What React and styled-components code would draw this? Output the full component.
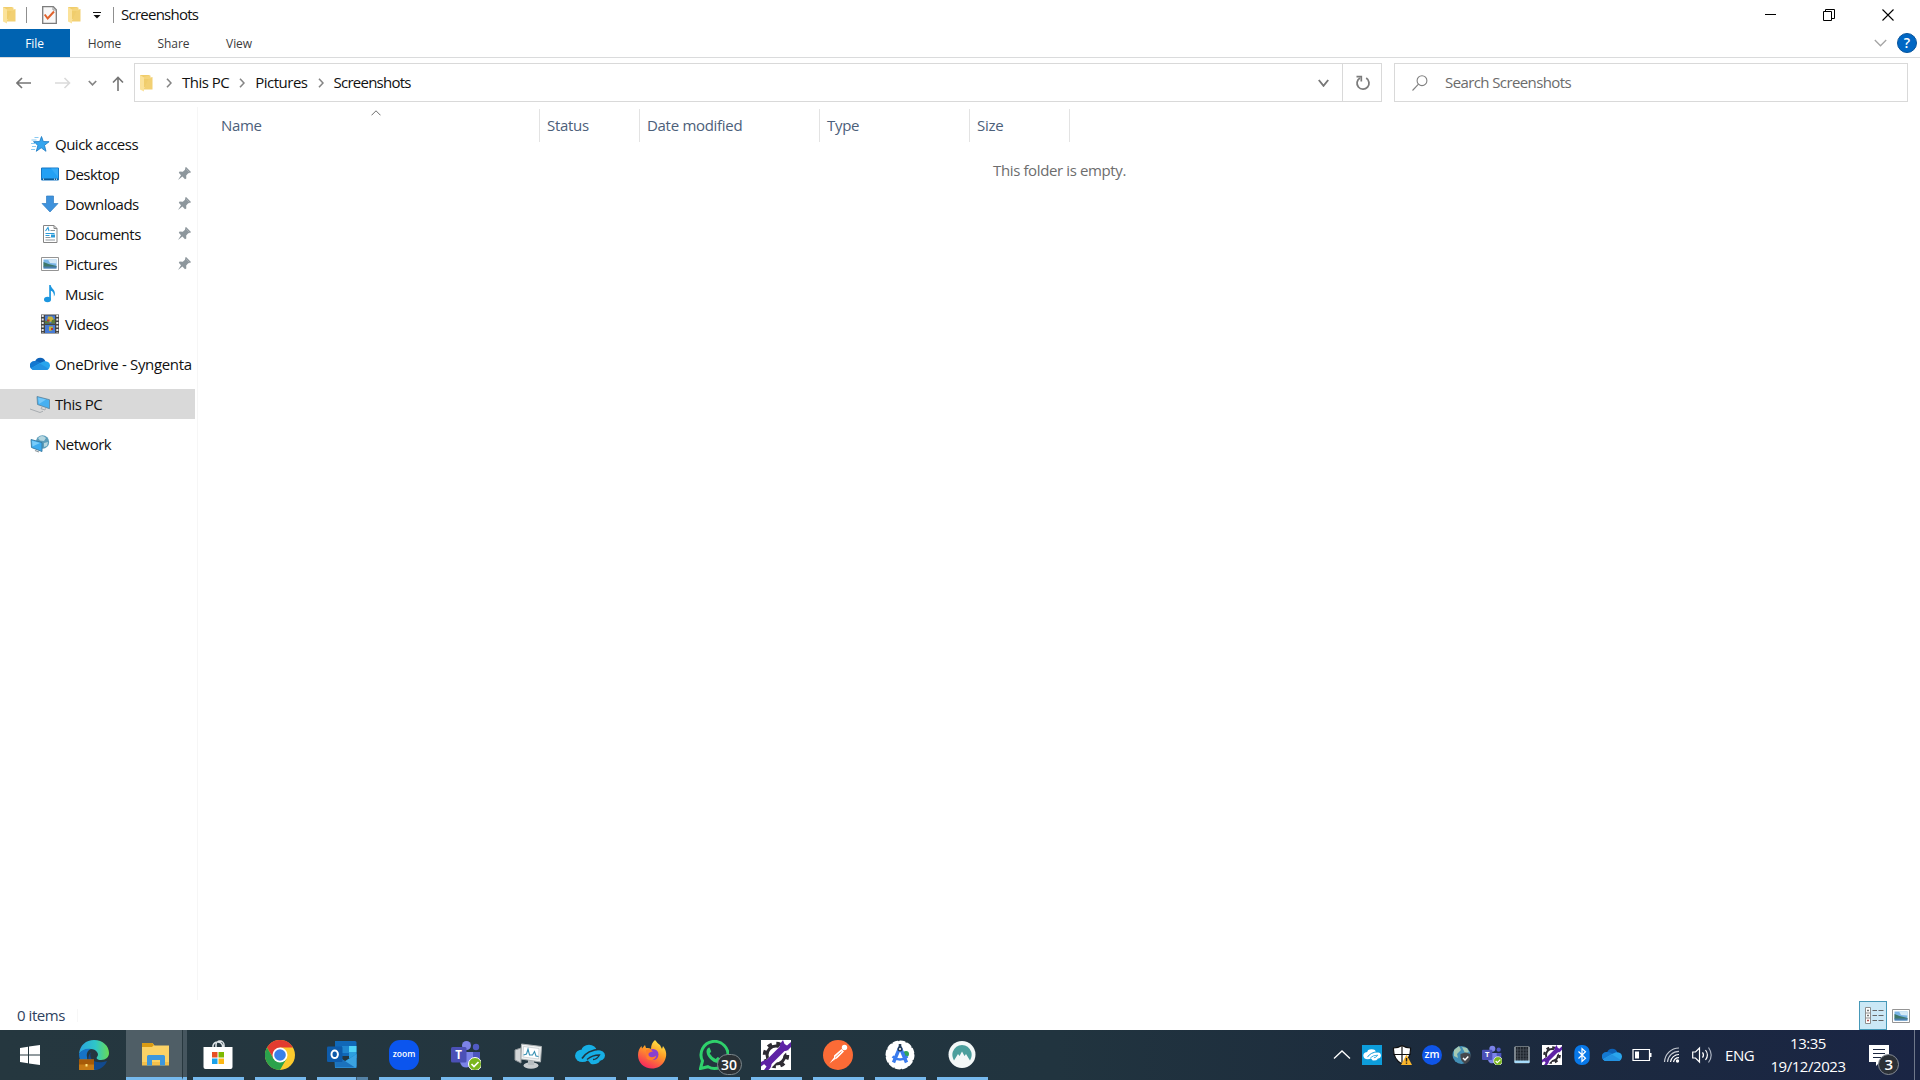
import styled, { createGlobalStyle } from 'styled-components'

const quickLinks = [
  { label: 'Desktop', icon: DesktopIcon, pinned: true },
  { label: 'Downloads', icon: DownloadsIcon, pinned: true },
  { label: 'Documents', icon: DocumentsIcon, pinned: true },
  { label: 'Pictures', icon: PictureIcon, pinned: true },
  { label: 'Music', icon: MusicIcon },
  { label: 'Videos', icon: VideosIcon },
]

const columns = [
  { label: 'Name', width: 333, sorted: true },
  { label: 'Status', width: 100 },
  { label: 'Date modified', width: 180 },
  { label: 'Type', width: 150 },
  { label: 'Size', width: 100 },
]

const runningApps = [
  ZoomIcon,
  TeamsIcon,
  MonitorIcon,
  ZscalerIcon,
  FirefoxIcon,
  WhatsappIcon,
  ToolIcon,
  PostmanIcon,
  AndroidStudioIcon,
  NordIcon,
]

export default function App() {
  return (
    <Screen>
      <GlobalStyle />
      <TitleBar />
      <Ribbon />
      <NavigationBar />
      <Body>
        <Sidebar />
        <FileList>
          <ColumnHeader>
            {columns.map(({ label, width, sorted }) => (
              <Column key={label} $width={width}>
                {label}
                {sorted && <SortArrow />}
              </Column>
            ))}
          </ColumnHeader>
          <EmptyMessage>This folder is empty.</EmptyMessage>
        </FileList>
      </Body>
      <StatusBar>
        <ItemCount>0 items</ItemCount>
        <ViewButton $active>
          <DetailsIcon />
        </ViewButton>
        <ViewButton>
          <PictureIcon />
        </ViewButton>
      </StatusBar>
      <Taskbar />
    </Screen>
  )
}

function TitleBar() {
  return (
    <TitleRow>
      <QuickTools>
        <FolderIcon />
        <Separator $left={10} $right={15} />
        <svg width="15" height="18" viewBox="0 0 15 18">
          <path d="M.7.7h10.600l3 3v13.600H.7z" fill="#f8f8f8" stroke="#7c7c7c" strokeWidth="1.300" />
          <path d="M11 .7v3.300h3.300" fill="none" stroke="#999" />
          <path d="M2.700 8.500l3 4L12 5.500" fill="none" stroke="#e0622c" strokeWidth="2" />
        </svg>
        <ToolGap />
        <FolderIcon />
        <Customize width="8" height="7" viewBox="0 0 8 7">
          <path d="M0 .5h8" stroke="#111" />
          <path d="M.5 3h7L4 6.500z" fill="#111" />
        </Customize>
        <Separator $left={12} $right={7} />
        <Title>Screenshots</Title>
      </QuickTools>
      <WindowButtons>
        <svg width="12" height="12" viewBox="0 0 12 12">
          <path d="M1 5.500h11" stroke="#000" />
        </svg>
        <svg width="12" height="12" viewBox="0 0 12 12">
          <path d="M.5 2.500h8v9h-8zM2.500 2.500v-2h9v9h-3" fill="none" stroke="#000" />
        </svg>
        <svg width="12" height="12" viewBox="0 0 12 12">
          <path d="M.5.500l11 11M11.500.500l-11 11" stroke="#000" strokeWidth="1.100" />
        </svg>
      </WindowButtons>
    </TitleRow>
  )
}

function Ribbon() {
  return (
    <RibbonRow>
      <FileTab>File</FileTab>
      <RibbonTab $width={69}>Home</RibbonTab>
      <RibbonTab $width={69}>Share</RibbonTab>
      <RibbonTab $width={62}>View</RibbonTab>
      <RibbonEnd>
        <Chevron color="#a5a5a5" width={13} height={8} />
        <HelpButton>?</HelpButton>
      </RibbonEnd>
    </RibbonRow>
  )
}

function NavigationBar() {
  return (
    <NavRow>
      <Arrows>
        <svg width="16" height="12" viewBox="0 0 16 12">
          <path d="M15 6H1.500M6 1L1 6l5 5" fill="none" stroke="#757575" strokeWidth="1.600" />
        </svg>
        <svg width="16" height="12" viewBox="0 0 16 12">
          <path d="M0 6h14.500M9.500 1l5 5-5 5" fill="none" stroke="#dadada" strokeWidth="1.600" />
        </svg>
        <Chevron color="#858585" width={9} height={6} stroke={1.7} />
        <svg width="12" height="15" viewBox="0 0 12 15">
          <path d="M6 15V1.500M1 6.500l5-5 5 5" fill="none" stroke="#757575" strokeWidth="1.600" />
        </svg>
      </Arrows>
      <AddressBar>
        <FolderIcon />
        <CrumbArrow $left={13} />
        <Crumb>This PC</Crumb>
        <CrumbArrow />
        <Crumb>Pictures</Crumb>
        <CrumbArrow />
        <Title>Screenshots</Title>
        <AddressEnd>
          <Chevron color="#777" width={11} height={8} stroke={1.9} />
        </AddressEnd>
        <RefreshButton>
          <svg width="16" height="16" viewBox="0 0 16 16">
            <path d="M5 3A6 6 0 1 0 11.200 3.100" fill="none" stroke="#7c7c7c" strokeWidth="1.800" />
            <path d="M1.500 1.700h4.800v4.800" fill="none" stroke="#7c7c7c" strokeWidth="1.700" />
          </svg>
        </RefreshButton>
      </AddressBar>
      <SearchBox>
        <svg width="16" height="16" viewBox="0 0 16 16">
          <circle cx="10" cy="5.700" r="4.900" fill="none" stroke="#808080" strokeWidth="1.100" />
          <path d="M6.500 9.200L.5 15.500" stroke="#808080" strokeWidth="1.100" />
        </svg>
        <SearchHint>Search Screenshots</SearchHint>
      </SearchBox>
    </NavRow>
  )
}

function Sidebar() {
  return (
    <Pane>
      <TreeItem>
        <StarIcon />
        <span>Quick access</span>
      </TreeItem>
      {quickLinks.map(({ label, icon: Icon, pinned }) => (
        <TreeItem key={label} $nested>
          <Icon />
          <span>{label}</span>
          {pinned && <PinIcon />}
        </TreeItem>
      ))}
      <TreeItem $spaced $wide>
        <CloudIcon />
        <span>OneDrive - Syngenta</span>
      </TreeItem>
      <TreeItem $spaced $selected>
        <PcIcon />
        <span>This PC</span>
      </TreeItem>
      <TreeItem $spaced>
        <NetworkIcon />
        <span>Network</span>
      </TreeItem>
    </Pane>
  )
}

function Taskbar() {
  return (
    <TaskRow>
      <TaskSlot $width={60}>
        <svg width="20" height="20" viewBox="0 0 20 20" fill="#fff">
          <path d="M0 3l8-1.200v7.700H0zM9 1.600L20 0v9.500H9zM0 10.500h8v7.700L0 17zM9 10.500h11V20L9 18.400z" />
        </svg>
      </TaskSlot>
      <TaskSlot $width={66} $shift={2}>
        <EdgeIcon />
      </TaskSlot>
      <ActiveTask>
        <ExplorerIcon />
      </ActiveTask>
      <StackedEdge />
      <Apps>
        <AppButton>
          <StoreIcon />
        </AppButton>
        <AppButton>
          <ChromeIcon />
        </AppButton>
        <AppButton $stacked>
          <OutlookIcon />
        </AppButton>
        {runningApps.map((Icon, i) => (
          <AppButton key={i}>
            <Icon />
          </AppButton>
        ))}
      </Apps>
      <Tray>
        <svg width="20" height="20" viewBox="0 0 20 20">
          <path d="M2 13.500l8-7.500 8 7.500" fill="none" stroke="#fff" strokeWidth="1.300" />
        </svg>
        <ZscalerTrayIcon />
        <ShieldIcon />
        <svg width="20" height="20" viewBox="0 0 20 20">
          <circle cx="10" cy="10" r="10" fill="#0f55e8" />
          <SvgText x="10" y="13.300" fontSize="10.500" fontWeight="600" textAnchor="middle">zm</SvgText>
        </svg>
        <GlobeIcon />
        <TeamsIcon size={20} />
        <svg width="20" height="20" viewBox="0 0 20 20">
          <path d="M3 1.500h14V18H3z" fill="#1d232b" stroke="#6b747b" />
          <path d="M5.700 2v14M8.500 2v14M11.300 2v14M14.100 2v14M3.500 5h13M3.500 8h13M3.500 11h13M3.500 14h13" stroke="#4a525b" strokeWidth=".8" />
          <path d="M3 2v15M17 2v15" stroke="#b4bcc2" />
          <path d="M2.500 15.500h15V18h-15z" fill="#a7dcfa" />
        </svg>
        <ToolIcon size={20} />
        <svg width="20" height="20" viewBox="0 0 20 20">
          <rect x="2.300" width="15.400" height="20" rx="7" fill="#0878e8" />
          <path d="M6.500 6.500l7 6.800-3.500 3.200v-13l3.500 3.200-7 6.800" fill="none" stroke="#fff" strokeWidth="1.200" />
        </svg>
        <CloudIcon />
        <svg width="20" height="20" viewBox="0 0 20 20">
          <path d="M1 4.500h16.500v11H1z" fill="none" stroke="#fff" strokeWidth="1.200" />
          <path d="M3 6.500h4v7H3zM18 8h1.500v4H18z" fill="#fff" />
        </svg>
        <svg width="20" height="20" viewBox="0 0 20 20">
          <g fill="none" strokeWidth="1.200" stroke="#c6cad2">
            <path d="M2.500 17A14.500 14.500 0 0 1 17 3" />
            <path d="M5.500 17A11.500 11.500 0 0 1 17 6.300" />
            <path d="M8.500 17A8.500 8.500 0 0 1 17 9.500" stroke="#fff" />
            <path d="M11.500 17A5.500 5.500 0 0 1 17 12.700" stroke="#fff" />
          </g>
          <circle cx="15.500" cy="16" r="1.700" fill="#fff" />
        </svg>
        <svg width="20" height="20" viewBox="0 0 20 20">
          <g fill="none" stroke="#fff" strokeWidth="1.200">
            <path d="M.7 7h2.800l4-4v14l-4-4H.7z" />
            <path d="M10.500 7.300q2 2.700 0 5.400M13.500 5q3.800 5 0 10" />
            <path d="M16.500 2.500q5.400 7.500 0 15" stroke="#a9b1bf" />
          </g>
        </svg>
      </Tray>
      <Language>ENG</Language>
      <Clock>
        <span>13:35</span>
        <span>19/12/2023</span>
      </Clock>
      <Notifications>
        <svg width="20" height="21" viewBox="0 0 20 21">
          <path d="M0 0h20v17h-9l-4 4v-4H0z" fill="#fff" />
          <path d="M4 4.500h12M4 8.500h12M4 12.500h8" stroke="#1c2740" strokeWidth="1.200" />
        </svg>
        <NotificationCount>3</NotificationCount>
      </Notifications>
      <ShowDesktop />
    </TaskRow>
  )
}

function Chevron({ color, width, height, stroke = 1.3 }) {
  return (
    <svg width={width} height={height} viewBox={`0 0 ${width} ${height}`}>
      <path
        d={`M.8 1L${width / 2} ${height - 1.2}L${width - 0.8} 1`}
        fill="none"
        stroke={color}
        strokeWidth={stroke}
      />
    </svg>
  )
}

function CrumbArrow({ $left = 10 }) {
  return (
    <CrumbChevron $left={$left} width="6" height="10" viewBox="0 0 6 10">
      <path d="M1 .8L5 5 1 9.200" fill="none" stroke="#858585" strokeWidth="1.600" />
    </CrumbChevron>
  )
}

function SortArrow() {
  return (
    <SortMark width="10" height="6" viewBox="0 0 10 6">
      <path d="M.5 5.300L5 .8l4.500 4.500" fill="none" stroke="#6d6d6d" />
    </SortMark>
  )
}

function FolderIcon() {
  return (
    <svg width="13" height="18" viewBox="0 0 13 18">
      <path d="M0 1h9.500v12.500H0z" fill="#f0cd6c" />
      <path d="M9 4l3.500-1v12.500H3.500z" fill="#f2d073" />
      <path d="M3.500 5h7V1.500H9L3.500 3z" fill="#f5d57c" />
      <path d="M0 1l4 2.500V17.500L0 15.500z" fill="#fbe29a" />
    </svg>
  )
}

function StarIcon() {
  return (
    <svg width="20" height="18" viewBox="0 0 20 18">
      <path d="M11.500 1.500l1.800 5 5.800.200-4.600 3.600 1.500 6-4.800-3.500-4.900 3.500 1.600-6L3.500 6.700l6.200-.2z" fill="#35a5ee" stroke="#1a79c2" strokeWidth=".8" />
      <path d="M4.500 2.500h4M1.500 5h5M1 8.500h5M2 11.500h4M1 14.500h4" stroke="#7cc3ef" strokeWidth=".9" />
    </svg>
  )
}

function DesktopIcon() {
  return (
    <svg width="20" height="18" viewBox="0 0 20 18">
      <path d="M1.500 3h17v12h-17z" fill="#23a0f4" stroke="#1777c4" />
      <path d="M11 3.500h7V12z" fill="#36abf8" />
      <path d="M2 14.200h16" stroke="#0b538c" strokeWidth="1.400" />
      <path d="M3 14.200h1M14 14.200h1M16 14.200h1" stroke="#fff" />
    </svg>
  )
}

function DownloadsIcon() {
  return (
    <svg width="20" height="18" viewBox="0 0 20 18">
      <path d="M6.500 1h7v7.500H18L10 17 2 8.500h4.500z" fill="#3e92dc" stroke="#2f7cc2" strokeWidth=".7" />
    </svg>
  )
}

function DocumentsIcon() {
  return (
    <svg width="20" height="20" viewBox="0 0 20 20">
      <path d="M3.500 1.500h10.500l3 3v14H3.500z" fill="#fff" stroke="#858585" />
      <path d="M14 1.500v3h3" fill="none" stroke="#858585" />
      <path d="M5.500 7L8 3.500 9 7M5.500 9.500h9M5.500 11.500h4" fill="none" stroke="#2c9bd8" strokeWidth="1.100" />
      <path d="M11 10.500h4v3h-4z" fill="#2c9bd8" />
      <path d="M10.500 6.500h4.500M5.500 13.500h5M5.500 16h9.500" stroke="#8f989e" strokeWidth="1.100" />
    </svg>
  )
}

function PictureIcon() {
  return (
    <svg width="20" height="18" viewBox="0 0 20 18">
      <path d="M1.500 2.500h17v13h-17z" fill="#fff" stroke="#949494" />
      <path d="M3.500 4.500h13v9h-13z" fill="#79b4e6" />
      <path d="M8 4.500h8.500v4L10 8z" fill="#d3e8f6" />
      <path d="M3.500 7l5 2 8 2v1h-13z" fill="#3f7769" />
      <path d="M3.500 11.500h13v2h-13z" fill="#4a7fae" />
    </svg>
  )
}

function MusicIcon() {
  return (
    <svg width="20" height="20" viewBox="0 0 20 20">
      <ellipse cx="7.500" cy="15.500" rx="3.500" ry="2.800" fill="#1c96df" />
      <path d="M9.200 1h1.500c.4 3.500 4.600 4.500 4.200 9-.1 1.300-.7 2-1 2.500.4-3.500-1.400-5.500-3-5.800v9H9.200z" fill="#1c96df" />
    </svg>
  )
}

function VideosIcon() {
  return (
    <svg width="20" height="20" viewBox="0 0 20 20">
      <path d="M1 .5h18v19H1z" fill="#444" />
      <path d="M2.700 1v18M17.300 1v18" stroke="#e9e9e9" strokeWidth="2" strokeDasharray="2 1.500" />
      <path d="M5 1.500h10v8H5zM5 11h10v8H5z" fill="#477bd4" />
      <path d="M8 2.500h4l2 3-3 2.500-4-1zM9 12.500h4l-1 4-3 .5z" fill="#c9b33a" />
      <path d="M5 6.500l4 1 1 2H5zM12 6l3-1v4.500h-4z" fill="#5c7c3a" />
      <path d="M7 5.500h2.500v2H7zM11 14h2v2h-2z" fill="#b53a32" />
    </svg>
  )
}

function CloudIcon() {
  return (
    <svg width="20" height="20" viewBox="0 0 20 20">
      <path d="M5 7.500a5.500 5.500 0 0 1 10.500 0l-5 4.500z" fill="#0d62b8" />
      <path d="M4.500 7q3-.5 5.500 1.500l3 2-8 5.500H4A4.500 4.500 0 0 1 4.500 7z" fill="#1478d0" />
      <path d="M10 9l4-1.800q5.500-.3 6 4-.2 4.800-4 4.800H4q-2 0-3-1.800z" fill="#29a5ed" />
      <path d="M1 14.200l9-4.700 8.500 5.300q-1 1.200-2.500 1.200H4q-2 0-3-1.800z" fill="#2392e2" />
    </svg>
  )
}

function PcIcon() {
  return (
    <svg width="20" height="18" viewBox="0 0 20 18">
      <path d="M7 1.500l12.500 3.200v9L7.500 9.500z" fill="#46b0f1" stroke="#5a8098" strokeWidth=".8" />
      <path d="M8 2.500l8 2-7 4.500z" fill="#74c8fa" />
      <path d="M12 12l-1 1.700 4 1.300.500-1.700M0 14l10 3.500 3-1.300" fill="none" stroke="#a2a7ab" strokeWidth=".9" />
    </svg>
  )
}

function NetworkIcon() {
  return (
    <svg width="20" height="20" viewBox="0 0 20 20">
      <circle cx="12.500" cy="8" r="6.700" fill="#5b9dbb" />
      <path d="M8 4q4-4 8 0l-2 3-4-.5zM14 9l4-1-1 4-3 1z" fill="#b5d6df" />
      <path d="M1 5.500l11 3v9L1.500 13.500z" fill="#3cabef" stroke="#36789f" strokeWidth=".9" />
      <path d="M2 6.800l8 2.200-7.500 3.500z" fill="#78ccfa" />
      <path d="M5 16.500l4 1.500" stroke="#8d979d" strokeWidth="1.300" />
    </svg>
  )
}

function PinIcon() {
  return (
    <Pin width="14" height="14" viewBox="0 0 14 14">
      <path d="M8 1l5 5-1.800.300-2 2.200.1 3-1.300.700-2.600-2.800L1 13l3-4.800L1.800 5.800 2.600 4.600l3.200.1 2.200-2z" fill="#8d969c" />
      <path d="M8.500.500l5 5" stroke="#8d969c" strokeWidth="1.500" />
    </Pin>
  )
}

function DetailsIcon() {
  return (
    <svg width="19" height="17" viewBox="0 0 19 17">
      <path d="M.5.500h5v16h-5zM.5 6h5M.5 11h5" fill="#fff" stroke="#8d8d8d" />
      <path d="M2.200 3.500h1.600M2.200 8.500h1.600" stroke="#555" strokeWidth="1.500" />
      <path d="M2.200 13.500h1.600" stroke="#a02828" strokeWidth="1.500" />
      <path d="M7.500 3.500h4.500M13.500 3.500h5M7.500 8.500h4.500M13.500 8.500h5M7.500 13.500h4.500M13.500 13.500h5" stroke="#666" />
    </svg>
  )
}

function EdgeIcon() {
  return (
    <svg width="30" height="30" viewBox="0 0 30 30">
      <defs>
        <linearGradient id="edgeTop" x1="0" x2="1">
          <stop offset="0" stopColor="#2aa3df" />
          <stop offset=".55" stopColor="#2fc6c8" />
          <stop offset="1" stopColor="#68db55" />
        </linearGradient>
      </defs>
      <path d="M0 14C1 5 7 0 15 0c9 0 15 6 15 13 0 4-3 7-8 7-4 0-5-2-4-3 3-3-1-8-6-8C6 9 1 12 0 14z" fill="url(#edgeTop)" />
      <path d="M0 14c2-4 7-6 12-5-3 1-5 4-4 8 0 6 5 11 11 12C8 33 0 24 0 14z" fill="#1673c6" />
      <path d="M12 12c-3 7 4 13 16 9-2 5-6 8-11 9-8-2-10-13-5-18z" fill="#124a8f" />
      <path d="M0 19.500h15V30H0z" fill="#c67a15" />
      <path d="M0 19.500h15v5H0z" fill="#a65a08" />
      <path d="M6.500 24h2v2.500h-2z" fill="#ffe27a" />
    </svg>
  )
}

function ExplorerIcon() {
  return (
    <svg width="30" height="30" viewBox="0 0 30 30">
      <path d="M1 3h10.500l2 2.500H28V25H1z" fill="#fbd266" />
      <path d="M1 3h10.500l1.500 2-2 2H1z" fill="#d99b14" />
      <path d="M1 22h27v3.500H1z" fill="#f4c04a" />
      <path d="M6 25.500V16.500q0-1.500 1.500-1.500h15q1.500 0 1.500 1.500v9h-5V20h-8v5.500z" fill="#3e97dc" />
    </svg>
  )
}

function StoreIcon() {
  return (
    <svg width="30" height="30" viewBox="0 0 30 30">
      <path d="M10 9V5.500a5 5 0 0 1 9.500 0V9M13 9V5a4 4 0 0 1 8 0v4" fill="none" stroke="#dfe5e8" strokeWidth="1.500" />
      <path d="M.5 7h29v20q0 2-2 2h-25q-2 0-2-2z" fill="#fff" />
      <path d="M9 12h5.500v5.500H9z" fill="#e64f24" />
      <path d="M15.500 12H21v5.500h-5.500z" fill="#7eb900" />
      <path d="M9 18.500h5.500V24H9z" fill="#1aa2ea" />
      <path d="M15.500 18.500H21V24h-5.500z" fill="#fcb714" />
    </svg>
  )
}

function ChromeIcon() {
  return (
    <svg width="30" height="30" viewBox="0 0 30 30">
      <circle cx="15" cy="15" r="15" fill="#fcca2d" />
      <path d="M2 7.500A15 15 0 0 1 28 7.500H15L8.500 18.700z" fill="#e23c30" />
      <path d="M2 7.500A15 15 0 0 0 15 30l6.500-11.300-6.500 3.500-6.500-3.500z" fill="#2ba24c" />
      <circle cx="15" cy="15" r="7.500" fill="#fff" />
      <circle cx="15" cy="15" r="5.800" fill="#397fe9" />
    </svg>
  )
}

function OutlookIcon() {
  return (
    <svg width="30" height="30" viewBox="0 0 30 30">
      <path d="M8 1h20q1.500 0 1.500 1.500V16H8z" fill="#1168b8" />
      <path d="M15 6h7v7h-7z" fill="#2086d0" />
      <path d="M22 6h7.500v6H22z" fill="#50d3f7" />
      <path d="M22 12h7.500v6H22z" fill="#2d9fdf" />
      <path d="M7 14l11 7 11.500-7v14H8z" fill="#1c80ca" />
      <path d="M8 28l21.500-14v12q0 2-2 2z" fill="#3aa3e1" />
      <path d="M7 14l21 13.500H9z" fill="#1b72bd" />
      <rect x="0" y="6.500" width="15.500" height="15.500" rx="1.300" fill="#0e5baa" />
      <ellipse cx="7.700" cy="14.300" rx="3.200" ry="3.800" fill="none" stroke="#fff" strokeWidth="2" />
    </svg>
  )
}

function ZoomIcon() {
  return (
    <svg width="30" height="30" viewBox="0 0 30 30">
      <rect width="30" height="30" rx="11" fill="#0b55ee" />
      <SvgText x="15" y="17" fontSize="8.500" fontWeight="600" textAnchor="middle">zoom</SvgText>
    </svg>
  )
}

function TeamsIcon({ size = 30 }) {
  return (
    <svg width={size} height={size} viewBox="0 0 30 30">
      <circle cx="15.500" cy="5.500" r="4.500" fill="#7c83e8" />
      <circle cx="25" cy="7" r="3.200" fill="#505ac4" />
      <path d="M19 12h10v9q-1 5-6 5h-4z" fill="#4d56bd" />
      <path d="M9 12h13v9q-1 6.500-6.500 6.500T9 22z" fill="#7b83e9" />
      <rect y="7" width="15.500" height="15.500" rx="1.500" fill="#4b50b6" />
      <SvgText x="7.700" y="18.700" fontSize="11.500" fontWeight="700" textAnchor="middle">T</SvgText>
      <circle cx="24" cy="24" r="6.500" fill="#79b51e" stroke="#fff" />
      <path d="M20.500 24l2.500 2.500 4.500-4.500" fill="none" stroke="#fff" strokeWidth="1.700" />
    </svg>
  )
}

function MonitorIcon() {
  return (
    <svg width="30" height="30" viewBox="0 0 30 30">
      <path d="M2 10l6-2v15l-6-3z" fill="#d3d6d7" stroke="#92989b" />
      <ellipse cx="18" cy="25.500" rx="7.500" ry="3.300" fill="#c9cdcf" />
      <path d="M15 20h6v5h-6z" fill="#b7bdc0" />
      <path d="M8.500 4l20 2.500L27.500 22 8 19z" fill="#f0f2f2" stroke="#a9afb1" />
      <path d="M10.500 6.500l15.500 2-.500 10.500L10 17z" fill="#fff" stroke="#c1c7ca" strokeWidth=".7" />
      <path d="M10.500 15l3-1 1.500-5 1.500 6h3l2-3.500 1.500 4.500 2.500.5" fill="none" stroke="#348fb2" strokeWidth="1.100" />
    </svg>
  )
}

function ZscalerMark({ color, gap }) {
  return (
    <g>
      <ellipse cx="7.500" cy="15.800" rx="7.500" ry="6.300" fill={color} />
      <ellipse cx="14" cy="10.500" rx="7.500" ry="5.700" fill={color} />
      <ellipse cx="22.500" cy="15.500" rx="7.500" ry="5.500" fill={color} />
      <path d="M10 17l6 7q6 1 9-3l-7-5z" fill={color} />
      <path d="M7 18.500Q12 10 26 9" fill="none" stroke={gap} strokeWidth="1.700" />
      <path d="M12 19.500Q17 15 24.500 15q-2.500 4.500-6.500 4.500" fill="none" stroke={gap} strokeWidth="1.300" />
    </g>
  )
}

function ZscalerIcon() {
  return (
    <svg width="30" height="30" viewBox="0 0 30 30">
      <ZscalerMark color="#16afe5" gap="#22353f" />
    </svg>
  )
}

function ZscalerTrayIcon() {
  return (
    <svg width="20" height="20" viewBox="0 0 30 30">
      <path d="M0 0h30v30H0z" fill="#0d9ddb" />
      <g transform="translate(2 2) scale(.88)">
        <ZscalerMark color="#fff" gap="#0d9ddb" />
      </g>
    </svg>
  )
}

function FirefoxIcon() {
  return (
    <svg width="30" height="30" viewBox="0 0 30 30">
      <defs>
        <linearGradient id="fox" x1=".8" y1="0" x2=".3" y2="1">
          <stop offset="0" stopColor="#fff04a" />
          <stop offset=".45" stopColor="#ff9a26" />
          <stop offset="1" stopColor="#f5245f" />
        </linearGradient>
      </defs>
      <path d="M18 0c2 2 3 4 5 5l2 4 1-3c4 5 4 10 1.500 15-2.500 5-7.500 7.500-12.500 7.500C7 28.500 1 23 1 15c0-4 1.500-7 3.500-9l.5 2.500L8 5l1 3q3-.500 5 1c0-4 1.500-7 4-9z" fill="url(#fox)" />
      <circle cx="16" cy="14.500" r="5.500" fill="#8a3fd0" />
      <path d="M9 10q4-2 7 1.500-4 .5-4.500 2.500c-.5 3 4 4.500 8 1.500-1 5-7 6-10 3z" fill="#ff7d2b" />
    </svg>
  )
}

function WhatsappIcon() {
  return (
    <IconWithBadge>
      <svg width="30" height="30" viewBox="0 0 30 30">
        <path d="M1.500 28.500l2-7.500A13.500 13.500 0 1 1 9 26.700z" fill="none" stroke="#2fd06b" strokeWidth="3" />
        <path d="M10.500 7.500l1.700 4-1.500 2q2.500 4 6 5.500l2-2 4 2c0 3-2 4-4 4C13 22.500 7.500 16 7.500 11.500c0-2 1.500-4 3-4z" fill="#2fd06b" />
      </svg>
      <UnreadCount>30</UnreadCount>
    </IconWithBadge>
  )
}

function ToolIcon({ size = 30 }) {
  return (
    <svg width={size} height={size} viewBox="0 0 30 30">
      <path d="M0 0h30v30H0z" fill="#fff" />
      <circle cx="15" cy="15" r="9" fill="none" stroke="#2d2b33" strokeWidth="3" />
      <circle cx="15" cy="15" r="11.500" fill="none" stroke="#2d2b33" strokeWidth="3.500" strokeDasharray="4.500 4.530" />
      <path d="M2 30L29 2" stroke="#fff" strokeWidth="9" />
      <path d="M4.500 25.500l20-20" stroke="#5e22a5" strokeWidth="6.500" />
      <path d="M22 0l-3 4q-1 4 2 6t6 0l3-3V2l-4 3.500-2.500-1.500z" fill="#5e22a5" />
      <path d="M0 22l4-2q5-.500 6.500 3.500 0 4-3 6.500H3l3-4-2-2.500-4 3z" fill="#5e22a5" />
    </svg>
  )
}

function PostmanIcon() {
  return (
    <svg width="30" height="30" viewBox="0 0 30 30">
      <circle cx="15" cy="15" r="15" fill="#fb6b36" />
      <circle cx="21.500" cy="7.500" r="2.700" fill="#fff" />
      <path d="M11 15.500l7.500-6.500 2.500 2.500-6.500 6.500L6 24l5-6.500z" fill="#fff" />
      <path d="M12 17.500l6.500-6M6 24l7-5" stroke="#fb6b36" strokeWidth=".8" />
    </svg>
  )
}

function AndroidStudioIcon() {
  return (
    <svg width="30" height="30" viewBox="0 0 30 30">
      <circle cx="15" cy="15" r="13" fill="#fff" />
      <circle cx="15" cy="15" r="13" fill="none" stroke="#fff" strokeWidth="3" strokeDasharray="4 2.807" strokeLinecap="round" />
      <circle cx="21" cy="14" r="3" fill="#2fa45b" />
      <path d="M15 7L8.500 22.500M15 7l6.500 15.500" stroke="#3a7cee" strokeWidth="3.400" />
      <path d="M7.500 16.500q7.500 6 15 0" fill="none" stroke="#3a7cee" strokeWidth="2.600" />
      <path d="M13.700 4h2.600v4h-2.600z" fill="#263c55" />
      <circle cx="15" cy="9" r="2.500" fill="#263c55" />
      <circle cx="15" cy="9" r="1" fill="#fff" />
    </svg>
  )
}

function NordIcon() {
  return (
    <svg width="30" height="30" viewBox="0 0 30 30">
      <circle cx="15" cy="14.500" r="13.500" fill="#f3f8f8" />
      <path d="M7 20.500Q4.500 16 5.700 12 8.500 5 15 5t9.300 7q1.200 4-1.300 8.500L19 14l-1.500 2L15 11.500 12.500 16 11 14z" fill="#4b9f9d" />
    </svg>
  )
}

function ShieldIcon() {
  return (
    <svg width="20" height="20" viewBox="0 0 20 20">
      <path d="M10 .5q4 2.500 8.500 2.500.5 11-8.500 16Q1 14 1.500 3 6 3 10 .5z" fill="#fff" stroke="#111" strokeWidth="1.200" />
      <path d="M10 1v17.500M1.500 9.500h17" stroke="#111" strokeWidth="1.200" />
      <path d="M14.500 9.500L20 20H9z" fill="#fbb62b" />
      <path d="M14.500 13v3.500M14.500 17.500v1.300" stroke="#222" strokeWidth="1.400" />
    </svg>
  )
}

function GlobeIcon() {
  return (
    <svg width="20" height="20" viewBox="0 0 20 20">
      <circle cx="9.500" cy="10" r="9" fill="#438fb5" />
      <path d="M2 5l5-4 2 4-4 4 1 4-4-2zM10 2l5 1 2 4-4 1z" fill="#a5c9b4" />
      <path d="M13.500 7.500l5 1.500q1 7-5 10-6-3-5-10z" fill="#45484d" />
      <path d="M11 13l2 2 3.300-3.500" fill="none" stroke="#fff" strokeWidth="1.500" />
    </svg>
  )
}

const GlobalStyle = createGlobalStyle`
  * {
    box-sizing: border-box;
  }

  body {
    margin: 0;
    overflow: hidden;
    background: #fff;
    font-family: 'Open Sans', 'Noto Sans', sans-serif;
    font-size: 15px;
    letter-spacing: -0.45px;
    color: #111;
  }

  svg {
    display: block;
    flex-shrink: 0;
  }
`

const Screen = styled.div`
  display: flex;
  flex-direction: column;
  width: 1920px;
  height: 1080px;
  white-space: nowrap;
`

const TitleRow = styled.header`
  display: flex;
  justify-content: space-between;
  height: 29px;
  padding: 0 26px 0 3px;
`

const QuickTools = styled.div`
  display: flex;
  align-items: center;
`

const Crumb = styled.span`
  padding-bottom: 2px;
  letter-spacing: -0.5px;
`

const Title = styled(Crumb)`
  letter-spacing: -0.75px;
`

const SearchHint = styled(Crumb)`
  letter-spacing: -0.6px;
`

const Separator = styled.i`
  width: 1px;
  height: 16px;
  margin: 0 ${p => p.$right}px 0 ${p => p.$left}px;
  background: #8f8f8f;
`

const ToolGap = styled.i`
  width: 11px;
`

const Customize = styled.svg`
  margin: 2px 0 0 12px;
`

const WindowButtons = styled.div`
  display: flex;
  align-items: center;
  gap: 47px;
`

const RibbonRow = styled.nav`
  display: flex;
  height: 29px;
  border-bottom: 1px solid #dadbdc;
  font-size: 12px;
  letter-spacing: -0.1px;
`

const RibbonTab = styled.div`
  display: flex;
  align-items: center;
  justify-content: center;
  width: ${p => p.$width}px;
  height: 28px;
  color: #3c3c3c;
`

const FileTab = styled(RibbonTab)`
  width: 70px;
  padding-right: 1px;
  background: #0063b1;
  color: #fff;
`

const RibbonEnd = styled.div`
  display: flex;
  align-items: center;
  gap: 10px;
  margin-left: auto;
  padding-right: 3px;
`

const HelpButton = styled.span`
  width: 20px;
  height: 20px;
  border: 1px solid #07549c;
  border-radius: 50%;
  background: #0067c4;
  color: #fff;
  font-size: 14px;
  font-weight: 600;
  line-height: 18px;
  text-align: center;
`

const NavRow = styled.div`
  display: flex;
  align-items: center;
  height: 49px;
  padding: 0 12px 0 16px;
`

const Arrows = styled.div`
  display: flex;
  align-items: center;
  width: 118px;
  padding-top: 1px;

  svg:nth-child(2) {
    margin-left: 23px;
  }

  svg:nth-child(3) {
    margin-left: 17px;
  }

  svg:nth-child(4) {
    margin-left: 15px;
  }
`

const AddressBar = styled.div`
  display: flex;
  align-items: center;
  width: 1248px;
  height: 39px;
  padding-left: 5px;
  border: 1px solid #d9d9d9;
`

const CrumbChevron = styled.svg`
  margin: 0 10px 0 ${p => p.$left}px;
`

const AddressEnd = styled.div`
  margin: 0 13px 0 auto;
`

const RefreshButton = styled.div`
  display: flex;
  align-items: center;
  justify-content: center;
  width: 39px;
  height: 37px;
  padding-left: 2px;
  border-left: 1px solid #d9d9d9;
`

const SearchBox = styled.div`
  display: flex;
  align-items: center;
  gap: 17px;
  flex: 1;
  height: 39px;
  margin-left: 12px;
  padding-left: 17px;
  border: 1px solid #d9d9d9;
  color: #6b6b6b;
`

const Body = styled.main`
  display: flex;
  flex: 1;
  min-height: 0;
`

const Pane = styled.aside`
  width: 198px;
  padding-top: 22px;
  border-right: 1px solid #f6f6f6;
`

const TreeItem = styled.div`
  display: flex;
  align-items: center;
  gap: 5px;
  width: 195px;
  height: 30px;
  margin-top: ${p => (p.$spaced ? 10 : 0)}px;
  padding-left: ${p => (p.$nested ? 40 : 30)}px;
  background: ${p => (p.$selected ? '#d9d9d9' : 'transparent')};
  letter-spacing: ${p => (p.$wide ? -0.33 : -0.5)}px;
`

const Pin = styled.svg`
  margin: 0 4px 0 auto;
`

const FileList = styled.section`
  flex: 1;
`

const ColumnHeader = styled.div`
  display: flex;
  height: 33px;
  margin: 2px 0 0 9px;
  letter-spacing: -0.3px;
  color: #4c607a;
`

const Column = styled.div`
  position: relative;
  display: flex;
  align-items: center;
  width: ${p => p.$width}px;
  padding: 0 0 2px 7px;
  border-right: 1px solid #e3e3e3;

  &:first-child {
    padding-left: 14px;
  }
`

const SortMark = styled.svg`
  position: absolute;
  top: 1px;
  left: 164px;
`

const EmptyMessage = styled.p`
  margin: 18px 0 0 1px;
  letter-spacing: -0.38px;
  text-align: center;
  color: #6d6d6d;
`

const StatusBar = styled.footer`
  display: flex;
  align-items: center;
  height: 30px;
  padding: 0 9px 0 17px;
`

const ItemCount = styled.span`
  margin-right: auto;
  padding-right: 12px;
  border-right: 1px solid #f7f7f7;
  line-height: 13px;
  color: #2f4260;
`

const ViewButton = styled.div`
  display: flex;
  align-items: center;
  justify-content: center;
  width: ${p => (p.$active ? 28 : 20)}px;
  height: 29px;
  margin: 1px 0 0 ${p => (p.$active ? 0 : 4)}px;
  padding-left: ${p => (p.$active ? 2 : 0)}px;
  border: ${p => (p.$active ? '1px solid #4698b8' : 'none')};
  background: ${p => (p.$active ? '#cbe8f6' : 'transparent')};
`

const TaskRow = styled.footer`
  display: flex;
  height: 50px;
  background: linear-gradient(90deg, #25373f 0%, #21343f 55%, #1c2b3d 75%, #1a2544 100%);
  color: #fff;
`

const TaskSlot = styled.div`
  display: flex;
  align-items: center;
  justify-content: center;
  width: ${p => p.$width}px;
  padding-left: ${p => p.$shift || 0}px;
`

const ActiveTask = styled.div`
  display: flex;
  align-items: center;
  justify-content: center;
  width: 56px;
  padding: 3px 0 0 4px;
  border-bottom: 3px solid #76b9ed;
  background: #4f5e66;
`

const StackedEdge = styled.i`
  width: 5px;
  border-left: 1px solid #28383f;
  border-bottom: 3px solid #76b9ed;
  background: #46565f;
`

const Apps = styled.div`
  display: flex;
  gap: 11px;
  margin-left: 6px;
`

const AppButton = styled.div`
  position: relative;
  display: flex;
  align-items: center;
  justify-content: center;
  width: 51px;
  padding: 3px 2px 0 0;
  border-bottom: 3px solid #76b9ed;

  &::after {
    content: '';
    display: ${p => (p.$stacked ? 'block' : 'none')};
    position: absolute;
    right: 0;
    bottom: -3px;
    width: 11px;
    height: 3px;
    border-left: 1px solid #3c5a70;
    background: #5482a5;
  }
`

const IconWithBadge = styled.div`
  position: relative;
`

const UnreadCount = styled.span`
  position: absolute;
  top: 14px;
  left: 18px;
  width: 25px;
  height: 21px;
  border: 1px solid #7c878c;
  border-radius: 11px;
  background: #2b3135;
  font-size: 14px;
  font-weight: 600;
  letter-spacing: 0;
  line-height: 19px;
  text-align: center;
`

const Tray = styled.div`
  display: flex;
  align-items: center;
  gap: 10px;
  margin-left: auto;
`

const SvgText = styled.text`
  fill: #fff;
  font-family: 'Open Sans', sans-serif;
  letter-spacing: 0;
`

const Language = styled.span`
  display: flex;
  align-items: center;
  width: 30px;
  margin-left: 13px;
`

const Clock = styled.time`
  display: flex;
  flex-direction: column;
  align-items: center;
  width: 76px;
  margin: 2px 23px 0 15px;
  line-height: 23px;
`

const Notifications = styled.div`
  position: relative;
  width: 45px;
  padding-top: 15px;
`

const NotificationCount = styled.span`
  position: absolute;
  top: 24px;
  left: 9px;
  width: 21px;
  height: 21px;
  border: 1px solid #858b94;
  border-radius: 50%;
  background: #2b3036;
  font-size: 15px;
  font-weight: 600;
  line-height: 19px;
  text-align: center;
`

const ShowDesktop = styled.i`
  width: 6px;
  border-left: 1px solid #6f788a;
`
